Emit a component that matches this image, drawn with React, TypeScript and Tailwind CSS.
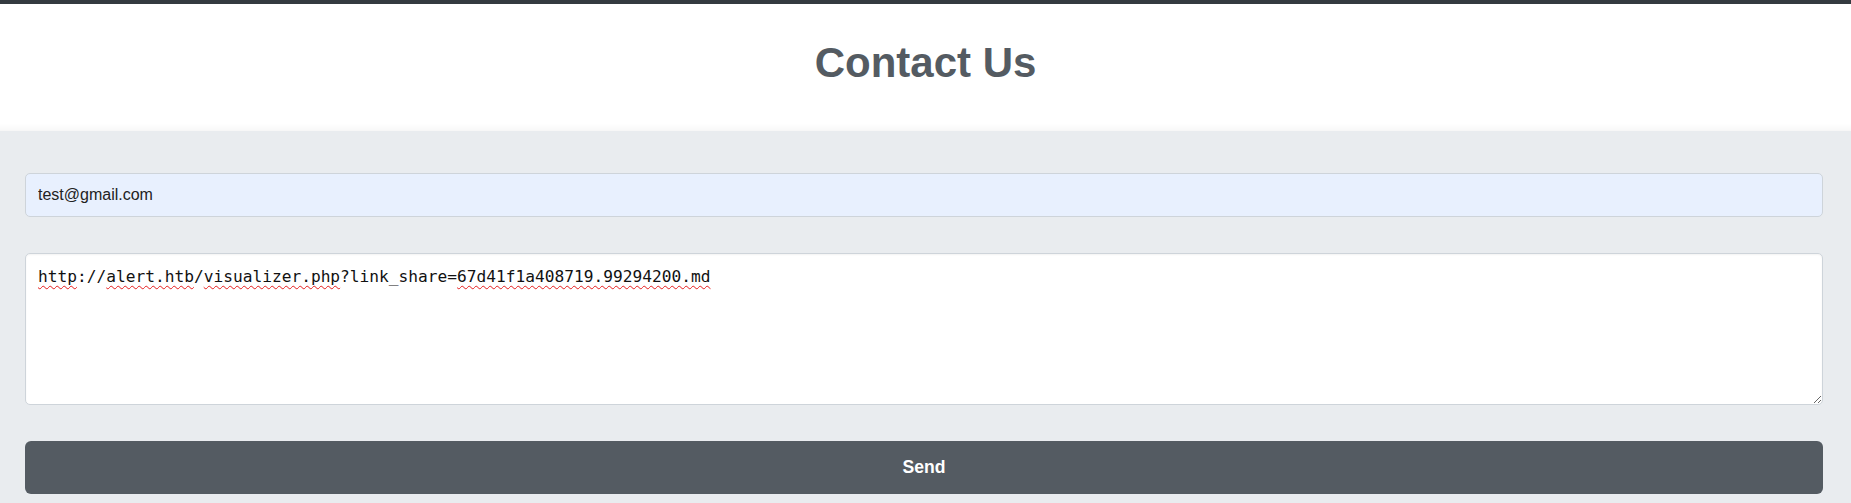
import { useState } from 'react';

const SHARE_LINK = 'http://alert.htb/visualizer.php?link_share=67d41f1a408719.99294200.md';

// words the browser's spellchecker marks in the message box
const segments: { text: string; flagged: boolean }[] = [
  { text: 'http', flagged: true },
  { text: '://', flagged: false },
  { text: 'alert.htb', flagged: true },
  { text: '/', flagged: false },
  { text: 'visualizer.php', flagged: true },
  { text: '?link_share=', flagged: false },
  { text: '67d41f1a408719.99294200.md', flagged: true },
];

export default function App() {
  const [email, setEmail] = useState('test@gmail.com');
  const [message, setMessage] = useState(SHARE_LINK);

  return (
    <div className="min-h-screen bg-[#e9ecef] font-['Liberation_Sans',Arial,sans-serif]">
      <header className="h-[131px] border-t-4 border-[#343a40] bg-white pt-[35px] text-center shadow-[inset_0_-10px_10px_-10px_rgba(0,0,0,0.07)]">
        <h1 className="text-[42px] font-bold leading-[normal] text-[#545b62]">Contact Us</h1>
      </header>

      <form
        className="flex flex-col pt-[42px] pl-[25px] pr-[28px]"
        onSubmit={(e) => e.preventDefault()}
      >
        <input
          type="email"
          value={email}
          onChange={(e) => setEmail(e.target.value)}
          className="h-[44px] w-full rounded-[5px] border border-[#ced4da] bg-[#e8f0fe] px-3 text-[16px] text-[#222] outline-none"
        />

        <div className="relative mt-[36px]">
          <textarea
            value={message}
            spellCheck={false}
            onChange={(e) => setMessage(e.target.value)}
            className="block h-[152px] w-full rounded-[5px] border border-[#ced4da] bg-white px-3 pt-[13px] font-['DejaVu_Sans_Mono',monospace] text-[16.2px] leading-[normal] text-[#111] shadow-[inset_0_1px_2px_rgba(0,0,0,0.05)] outline-none"
          />
          {/* spellcheck squiggles */}
          {message === SHARE_LINK && (
            <div className="pointer-events-none absolute top-0 left-0 border border-transparent px-3 pt-[13px] font-['DejaVu_Sans_Mono',monospace] text-[16.2px] leading-[normal] text-transparent">
              {segments.map((s, i) =>
                s.flagged ? (
                  <span
                    key={i}
                    className="underline decoration-[#e51c1c] decoration-wavy decoration-1 underline-offset-[3px]"
                  >
                    {s.text}
                  </span>
                ) : (
                  <span key={i}>{s.text}</span>
                )
              )}
            </div>
          )}
        </div>

        <button
          type="submit"
          className="mt-[36px] h-[53px] w-full rounded-[6px] bg-[#545b62] text-[17.6px] font-bold text-white"
        >
          Send
        </button>
      </form>
    </div>
  );
}
